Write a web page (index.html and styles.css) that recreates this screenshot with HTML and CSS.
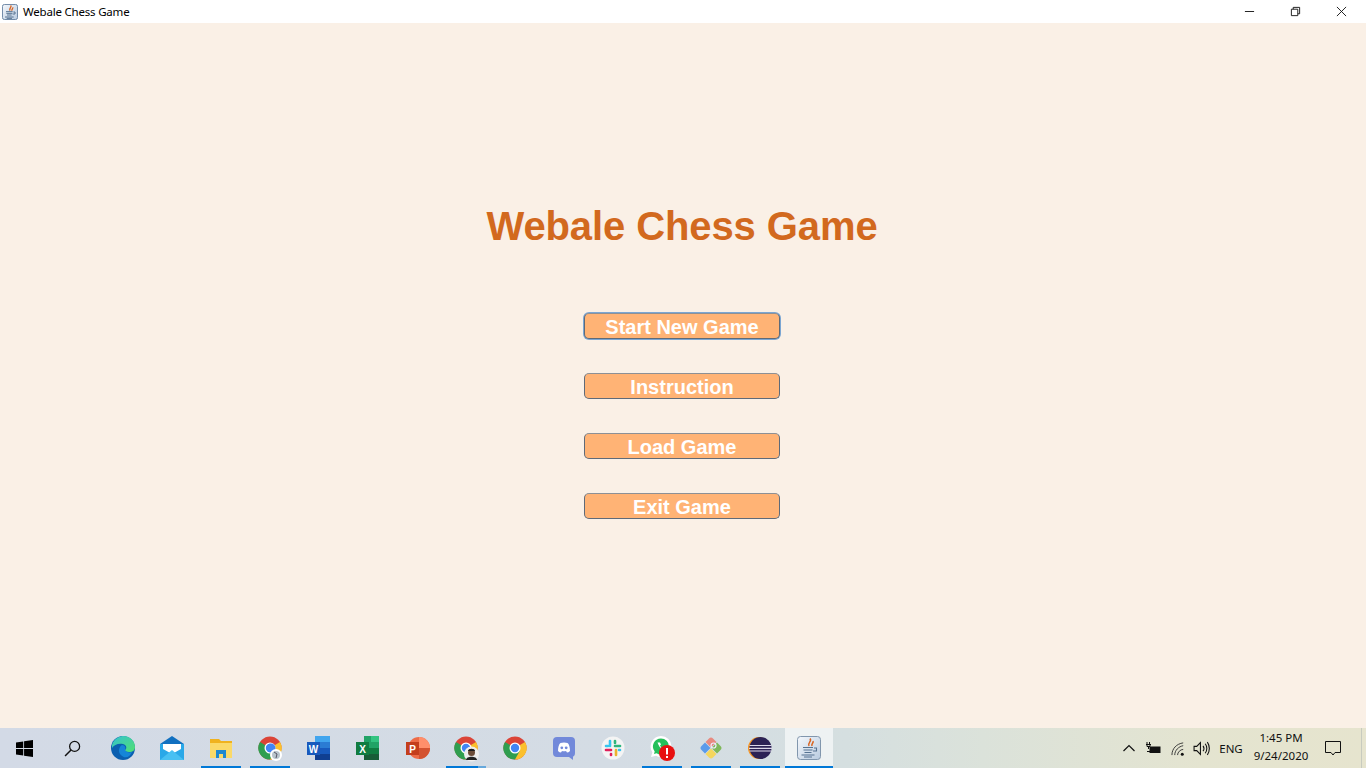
FILE: index.html
```html
<!DOCTYPE html>
<html lang="en">
<head>
<meta charset="utf-8">
<title>Webale Chess Game</title>
<link rel="stylesheet" href="styles.css">
</head>
<body>
<header class="titlebar">
  <div class="title-left">
    <svg class="app-icon" viewBox="0 0 24 24">
      <defs><linearGradient id="jv" x1="0" y1="0" x2="1" y2="1"><stop offset="0" stop-color="#f4f7fb"/><stop offset="1" stop-color="#b9cbe0"/></linearGradient></defs>
      <rect x="0.700" y="0.700" width="22.600" height="22.600" rx="3" fill="url(#jv)" stroke="#64809f" stroke-width="1.400"/>
      <path d="M13 2c2.500 3-3 4-1 8M16 5c1 2-2 2.500-1 5" fill="none" stroke="#d9621e" stroke-width="2"/>
      <path d="M6 11.500h10M6.500 14h9M7.500 16.500h7M17 12h2.500v3H16" fill="none" stroke="#567391" stroke-width="1.500"/>
      <path d="M4.500 19.500h13M7 21.500h8" stroke="#567391" stroke-width="1.500"/>
    </svg>
    <span class="title-text">Webale Chess Game</span>
  </div>
  <div class="win-controls">
    <span class="win-btn"><svg viewBox="0 0 12 12"><path d="M1 6h10" stroke="#111" fill="none"/></svg></span>
    <span class="win-btn"><svg viewBox="0 0 12 12"><path d="M1.500 3.500h7v7h-7zM3.500 3.500v-2h7v7h-2" stroke="#111" fill="none"/></svg></span>
    <span class="win-btn"><svg viewBox="0 0 12 12"><path d="M1 1l10 10M11 1L1 11" stroke="#111" fill="none"/></svg></span>
  </div>
</header>

<main class="menu">
  <h1 class="game-title">Webale Chess Game</h1>
  <div class="menu-buttons">
    <button class="menu-btn is-focused">Start New Game</button>
    <button class="menu-btn">Instruction</button>
    <button class="menu-btn">Load Game</button>
    <button class="menu-btn">Exit Game</button>
  </div>
</main>

<footer class="taskbar">
  <div class="tb-fixed">
    <svg class="ico-start" viewBox="0 0 16 16"><path d="M0 2.300l6.800-1v6.200H0zM7.600 1.200L16 0v7.500H7.600zM0 8.400h6.800v6.300L0 13.700zM7.600 8.400H16V16l-8.400-1.200z" fill="#000"/></svg>
  </div>
  <div class="tb-fixed">
    <svg class="ico-search" viewBox="0 0 16 16"><circle cx="10" cy="6" r="4.700" fill="none" stroke="#111" stroke-width="1.200"/><path d="M6.600 9.400L1 15" stroke="#111" stroke-width="1.400"/></svg>
  </div>
  <div class="tb-apps">
    <div class="slot"><svg class="ico" viewBox="0 0 24 24">
      <defs><linearGradient id="eg" x1="0" y1="0" x2="1" y2="1"><stop offset="0" stop-color="#35c1d0"/><stop offset="1" stop-color="#50e070"/></linearGradient></defs>
      <circle cx="12" cy="12" r="12" fill="#0b5fb0"/>
      <path d="M1 9C3 2 9 0 13 0c6 0 11 5 11 11 0 3-2 5-6 5-3 0-4-1-4-2 2-1 2-5-2-6C7 7 3 9 1 12z" fill="url(#eg)"/>
      <path d="M9 18c-2-3-1-7 2-9 3 0 4 3 3 5 1 2 4 3 7 2-2 5-7 8-12 2z" fill="#1585d8"/>
    </svg></div>
    <div class="slot"><svg class="ico" viewBox="0 0 24 24">
      <path d="M0 8L12 0l12 8v16H0z" fill="#1170c0"/>
      <path d="M0 8h24v16H0z" fill="#2aa8e8"/>
      <path d="M3 8h18v5l-9 5-9-5z" fill="#fff"/>
      <path d="M0 24L12 14l12 10z" fill="#48c0f2"/>
    </svg></div>
    <div class="slot is-open"><svg class="ico" viewBox="0 0 24 24">
      <path d="M1 3h9l2 2h11v17H1z" fill="#f0b21e"/>
      <path d="M1 7h22v15H1z" fill="#fbd968"/>
      <path d="M7 22v-8h10v8h-3v-4h-4v4z" fill="#1f88d0"/>
    </svg></div>
    <div class="slot is-open"><svg class="ico" viewBox="0 0 24 24">
      <use href="#chrome"/>
      <circle cx="13" cy="12" r="4.500" fill="#4285f4"/>
      <circle cx="18" cy="19" r="6" fill="#fff"/>
      <circle cx="18" cy="19" r="4" fill="#b8c4cc"/>
      <path d="M16 16l3 2-1 4" fill="none" stroke="#556" stroke-width="1"/>
    </svg></div>
    <div class="slot"><svg class="ico" viewBox="0 0 24 24">
      <path d="M8 0h15v24H8z" fill="#2b7cd3"/><path d="M8 0h15v6H8z" fill="#41a5ee"/><path d="M8 12h15v6H8z" fill="#185abd"/><path d="M8 18h15v6H8z" fill="#103f91"/>
      <rect x="0" y="6" width="13" height="13" fill="#185abd"/>
      <text x="6.500" y="16.500" class="ico-letter">W</text>
    </svg></div>
    <div class="slot"><svg class="ico" viewBox="0 0 24 24">
      <path d="M8 0h15v24H8z" fill="#21a366"/><path d="M15 0h8v6h-8z" fill="#33c481"/><path d="M8 12h15v6H8z" fill="#107c41"/><path d="M8 18h15v6H8z" fill="#185c37"/>
      <rect x="0" y="6" width="13" height="13" fill="#107c41"/>
      <text x="6.500" y="16.500" class="ico-letter">X</text>
    </svg></div>
    <div class="slot"><svg class="ico" viewBox="0 0 24 24">
      <circle cx="14" cy="12" r="11" fill="#ed6c47"/><path d="M14 1a11 11 0 0 1 11 11H14z" fill="#ff8f6b"/><path d="M14 12h11a11 11 0 0 1-11 11z" fill="#d35230"/>
      <rect x="1" y="6" width="13" height="13" fill="#c43e1c"/>
      <text x="7.500" y="16.500" class="ico-letter">P</text>
    </svg></div>
    <div class="slot is-open is-multi"><svg class="ico" viewBox="0 0 24 24">
      <use href="#chrome"/>
      <circle cx="17.500" cy="18" r="7.500" fill="#eee"/>
      <circle cx="17.500" cy="16.500" r="3.500" fill="#6b4c38"/>
      <path d="M14 15c0-3 7-3 7 0z" fill="#1b1b1b"/>
      <path d="M12 24c0-4.500 11-4.500 11 0z" fill="#222"/>
    </svg></div>
    <div class="slot"><svg class="ico" viewBox="0 0 24 24">
      <g id="chrome">
        <circle cx="12" cy="12" r="11.500" fill="#db4437"/>
        <path d="M12 12L22 6a11.500 11.500 0 0 1-10 17.500z" fill="#fbc02d"/>
        <path d="M12 12l-10-6a11.500 11.500 0 0 0 10 17.500l5-9z" fill="#2f9e4f"/>
        <circle cx="12" cy="12" r="5.500" fill="#fff"/>
        <circle cx="12" cy="12" r="4.200" fill="#4285f4"/>
      </g>
    </svg></div>
    <div class="slot"><svg class="ico" viewBox="0 0 24 24">
      <rect x="1" y="1" width="22" height="20" rx="4" fill="#7289da"/>
      <path d="M6 15c0-4 1-7 2.500-8 2-.7 5-.7 7 0C17 8 18 11 18 15c-1 1-2 1.500-3 1.500l-1-1.500c-1 .3-3 .3-4 0l-1 1.500C8 16.500 7 16 6 15z" fill="#fff"/>
      <circle cx="9.800" cy="11.800" r="1.400" fill="#7289da"/><circle cx="14.200" cy="11.800" r="1.400" fill="#7289da"/>
      <path d="M17 21l4 3v-4z" fill="#7289da"/>
    </svg></div>
    <div class="slot"><svg class="ico" viewBox="0 0 24 24">
      <circle cx="12" cy="12" r="11.500" fill="#f4f4f4"/>
      <path d="M9 5v5" stroke="#36c5f0" stroke-width="2.600" stroke-linecap="round"/><path d="M5 14h5" stroke="#e01e5a" stroke-width="2.600" stroke-linecap="round"/>
      <path d="M14 10h5" stroke="#2eb67d" stroke-width="2.600" stroke-linecap="round"/><path d="M14 5v2" stroke="#2eb67d" stroke-width="2.600" stroke-linecap="round"/>
      <path d="M15 14v5" stroke="#ecb22e" stroke-width="2.600" stroke-linecap="round"/><path d="M10 18v1" stroke="#e01e5a" stroke-width="2.600" stroke-linecap="round"/>
      <path d="M5 10h2M18 14h1" stroke="#36c5f0" stroke-width="2.600" stroke-linecap="round"/>
    </svg></div>
    <div class="slot is-open"><svg class="ico" viewBox="0 0 24 24">
      <path d="M11 0a10.500 10.500 0 0 1 0 21c-2 0-3.500-.5-5-1.300L1 21l1.400-4.700A10.500 10.500 0 0 1 11 0z" fill="#fff"/>
      <path d="M11 2.500a8 8 0 0 1 0 16c-1.800 0-3-.5-4.500-1.300l-2.500.7.700-2.400A8 8 0 0 1 11 2.500z" fill="#25c05a"/>
      <path d="M7.500 6.500c2 5 3 6 6.500 7.500l1.500-2-2-1-1 1c-1-.5-2-1.500-2.500-2.500l1-1-1-2z" fill="#fff"/>
      <circle cx="17" cy="17" r="8" fill="#e81010"/>
      <path d="M17 12v6.500M17 20v2" stroke="#fff" stroke-width="2"/>
    </svg></div>
    <div class="slot is-open"><svg class="ico" viewBox="0 0 24 24">
      <path d="M12 11.500L6.500 6l3.500-3.500a2.800 2.800 0 0 1 4 0L17.500 6z" fill="#e88a80"/>
      <path d="M12.500 12l5.500-5.500 3.500 3.500a2.800 2.800 0 0 1 0 4L18 17.500z" fill="#7fb85a"/>
      <path d="M12 12.500l5.500 5.500-3.500 3.500a2.800 2.800 0 0 1-4 0L6.500 18z" fill="#f4d65e"/>
      <path d="M11.500 12L6 17.500 2.500 14a2.800 2.800 0 0 1 0-4L6 6.500z" fill="#5b9bea"/>
      <circle cx="14.500" cy="9.500" r="2.500" fill="none" stroke="#eef" stroke-width="1.200"/>
    </svg></div>
    <div class="slot is-open"><svg class="ico" viewBox="0 0 24 24">
      <circle cx="11" cy="12" r="11" fill="#f7941e"/>
      <circle cx="12.500" cy="12" r="11" fill="#2c2255"/>
      <path d="M1.500 9.500h22M1 12.300h23M1.700 15h21.600" stroke="#dcd8ea" stroke-width="1.200"/>
    </svg></div>
    <div class="slot is-active"><svg class="ico" viewBox="0 0 24 24">
      <rect x="0.500" y="0.500" width="23" height="23" rx="3" fill="url(#jv)" stroke="#8196ad"/>
      <path d="M13 2.500c2.500 3-3 4-1 7.500M16 5c1 2-2 2.500-1 5" fill="none" stroke="#d9621e" stroke-width="1.500"/>
      <path d="M6 11.500h10M6.500 14h9M7.500 16.500h7M17 12h2.500v3H16" fill="none" stroke="#567391" stroke-width="1.100"/>
      <path d="M4.500 19h13M7 21h8" stroke="#567391" stroke-width="1.100"/>
    </svg></div>
  </div>
  <div class="tray">
    <svg class="tray-chevron" viewBox="0 0 12 12"><path d="M.5 9L6 3.500 11.500 9" fill="none" stroke="#111" stroke-width="1.200"/></svg>
    <svg class="tray-battery" viewBox="0 0 16 12"><path d="M2 0v2M4.500 0v2M1 2.500h5M2 2.500v2h3v-2M3.500 4.500V7" stroke="#111" fill="none"/><rect x="4.500" y="4.500" width="11" height="6.500" fill="#111"/><path d="M2 9.500h3" stroke="#111"/></svg>
    <svg class="tray-wifi" viewBox="0 0 16 16"><path d="M1 15C1 8 6 3 13 2M4 15c0-5 4-9 9-10M7 15c0-3 3-6 6-6" fill="none" stroke="#333" stroke-width="1"/><circle cx="12" cy="14" r="1.600" fill="#111"/></svg>
    <svg class="tray-volume" viewBox="0 0 16 16"><path d="M1 6h2.500L7 2.500v11L3.500 10H1z" fill="none" stroke="#111"/><path d="M9.500 5.500c1 1.500 1 3.500 0 5M11.500 3.500c2 2.500 2 6.500 0 9M13.500 2c2.500 3.500 2.500 8.500 0 12" fill="none" stroke="#111"/></svg>
    <span class="tray-lang">ENG</span>
    <div class="clock"><span>1:45 PM</span><span>9/24/2020</span></div>
    <svg class="tray-notify" viewBox="0 0 16 16"><path d="M.5 1.500h15v11H10L8 15l-2-2.500H.5z" fill="none" stroke="#111"/></svg>
    <span class="show-desktop"></span>
  </div>
</footer>
</body>
</html>
```
FILE: styles.css
```css
* { box-sizing: border-box; }
html, body { margin: 0; height: 100%; }
body {
  width: 1366px;
  height: 768px;
  overflow: hidden;
  display: flex;
  flex-direction: column;
  font-family: "Noto Sans", "Open Sans", sans-serif;
  background: #faf0e6;
}

.titlebar {
  height: 23px;
  flex: none;
  background: #fff;
  display: flex;
  justify-content: space-between;
  align-items: center;
}
.title-left { display: flex; align-items: center; padding-left: 2px; }
.app-icon { width: 16px; height: 16px; display: block; }
.title-text { margin-left: 5px; font-size: 11.500px; letter-spacing: -0.200px; color: #000; line-height: 23px; }
.win-controls { display: flex; margin-right: 2px; }
.win-btn { width: 46px; height: 23px; display: flex; align-items: center; justify-content: center; }
.win-btn svg { width: 11px; height: 11px; display: block; }

.menu {
  flex: 1;
  display: flex;
  flex-direction: column;
  align-items: center;
  padding: 180px 2px 0 0;
}
.game-title {
  margin: 0;
  font: bold 40px/46px "Liberation Sans", Arial, sans-serif;
  letter-spacing: -0.100px;
  color: #d2691e;
}
.menu-buttons {
  margin-top: 64px;
  display: flex;
  flex-direction: column;
  align-items: center;
  gap: 34px;
}
.menu-btn {
  width: 196px;
  height: 26px;
  padding: 2px 0 0;
  border: 1px solid #5f6a78;
  border-top-color: #8d9095;
  border-radius: 5px;
  background: #ffb375;
  color: #fff;
  font: bold 20px/22px "Liberation Sans", Arial, sans-serif;
}
.is-focused { box-shadow: 0 0 0 1px #7ba6d3; }

.taskbar {
  height: 40px;
  flex: none;
  display: flex;
  align-items: stretch;
  background: linear-gradient(90deg, #d3dae6 0%, #d4dce4 45%, #d5dfe0 62%, #dbe2da 72%, #e4e4d0 88%, #e6e4ce 100%);
}
.tb-fixed { width: 48px; display: flex; align-items: center; justify-content: center; }
.ico-start { width: 17px; height: 17px; }
.ico-search { width: 17px; height: 17px; }
.tb-apps { margin-left: 2.500px; display: flex; }
.slot {
  width: 49px;
  display: flex;
  align-items: center;
  justify-content: center;
  position: relative;
}
.ico { width: 24px; height: 24px; display: block; overflow: visible; }
.ico-letter {
  font: bold 10px "Liberation Sans", Arial, sans-serif;
  fill: #fff;
  text-anchor: middle;
}
.is-open::after {
  content: "";
  position: absolute;
  left: 4.500px;
  right: 4.500px;
  bottom: 0;
  height: 2px;
  background: #0078d7;
}
.is-multi::after {
  background: linear-gradient(90deg, #0078d7 0, #0078d7 80%, #66a8dc 80%);
}
.is-active { background: #eef2f3; width: 48px; }
.is-active::after {
  content: "";
  position: absolute;
  left: 0;
  right: 0;
  bottom: 0;
  height: 2px;
  background: #0078d7;
}

.tray {
  margin-left: auto;
  display: flex;
  align-items: center;
  color: #111;
}
.tray-chevron { width: 12px; height: 12px; margin-right: 10px; }
.tray-battery { width: 16px; height: 12px; margin-right: 9.500px; }
.tray-wifi { width: 15px; height: 15px; margin-right: 7px; }
.tray-volume { width: 17px; height: 17px; margin-right: 8.500px; }
.tray-lang { font-size: 11.500px; width: 26px; text-align: center; }
.clock {
  width: 74px;
  display: flex;
  flex-direction: column;
  align-items: center;
  font-size: 11.500px;
  line-height: 18px;
  padding-bottom: 2px;
}
.tray-notify { width: 16px; height: 16px; margin-left: 7px; }
.show-desktop { width: 1px; height: 40px; background: #c8cbbf; margin-left: 20px; margin-right: 4px; }
```
